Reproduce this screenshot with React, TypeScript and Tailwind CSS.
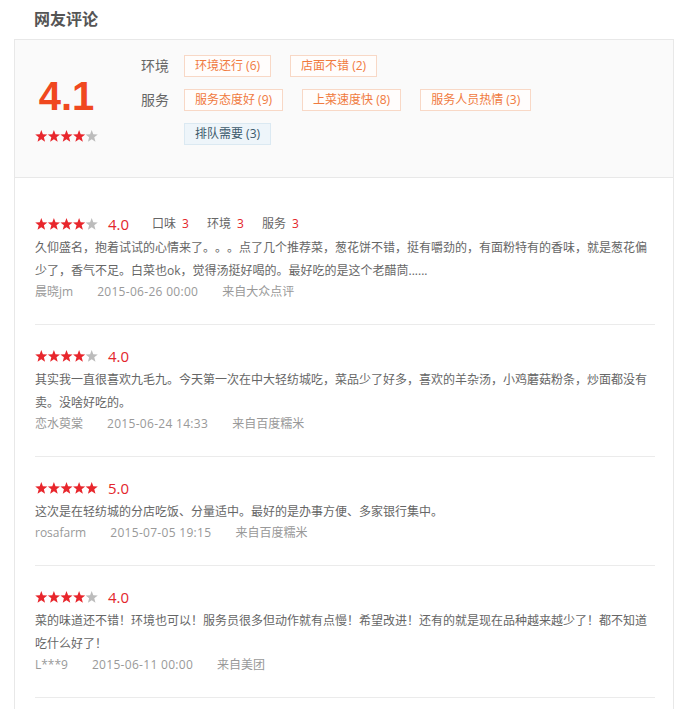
import React from 'react';

interface Review {
  score: number;
  sub?: { label: string; value: number }[];
  lines: string;
  user: string;
  time: string;
  source: string;
}

const reviews: Review[] = [
  {
    score: 4,
    sub: [
      { label: '口味', value: 3 },
      { label: '环境', value: 3 },
      { label: '服务', value: 3 },
    ],
    lines:
      '久仰盛名，抱着试试的心情来了。。。点了几个推荐菜，葱花饼不错，挺有嚼劲的，有面粉特有的香味，就是葱花偏少了，香气不足。白菜也ok，觉得汤挺好喝的。最好吃的是这个老醋茼......',
    user: '晨晓jm',
    time: '2015-06-26 00:00',
    source: '来自大众点评',
  },
  {
    score: 4,
    lines: '其实我一直很喜欢九毛九。今天第一次在中大轻纺城吃，菜品少了好多，喜欢的羊杂汤，小鸡蘑菇粉条，炒面都没有卖。没啥好吃的。',
    user: '恋水萸棠',
    time: '2015-06-24 14:33',
    source: '来自百度糯米',
  },
  {
    score: 5,
    lines: '这次是在轻纺城的分店吃饭、分量适中。最好的是办事方便、多家银行集中。',
    user: 'rosafarm',
    time: '2015-07-05 19:15',
    source: '来自百度糯米',
  },
  {
    score: 4,
    lines: '菜的味道还不错！环境也可以！服务员很多但动作就有点慢！希望改进！还有的就是现在品种越来越少了！都不知道吃什么好了！',
    user: 'L***9',
    time: '2015-06-11 00:00',
    source: '来自美团',
  },
];

const tagRows = [
  { label: '环境', tags: ['环境还行 (6)', '店面不错 (2)'], tone: 'good' },
  { label: '服务', tags: ['服务态度好 (9)', '上菜速度快 (8)', '服务人员热情 (3)'], tone: 'good' },
  { label: '', tags: ['排队需要 (3)'], tone: 'bad' },
];

const STAR = '6.3,0.1 7.89,4.32 12.39,4.52 8.87,7.33 10.06,11.68 6.3,9.2 2.54,11.68 3.73,7.33 0.21,4.52 4.71,4.32';

const Stars = ({ count }: { count: number }) => (
  <svg width="63" height="12" viewBox="0 0 63 12" className="block shrink-0">
    {[0, 1, 2, 3, 4].map((i) => (
      <polygon
        key={i}
        points={STAR}
        transform={`translate(${i * 12.6} 0)`}
        fill={i < count ? '#e8262c' : '#bcbcbc'}
      />
    ))}
  </svg>
);

export default function App() {
  return (
    <div className="w-[688px] min-h-[709px] bg-white font-['Open_Sans','Noto_Sans_CJK_SC',sans-serif] text-[#666] [text-spacing-trim:space-all]">
      <h2 className="h-[39px] pl-[34px] pt-[10px] text-[16px] leading-[18px] font-bold text-[#555]">网友评论</h2>

      <div className="ml-[14px] w-[660px] border border-b-0 border-[#e8e8e8] min-h-[670px]">
        {/* summary */}
        <div className="flex h-[138px] bg-[#fafafa] border-b border-[#e8e8e8]">
          <div className="w-[103px] flex flex-col items-center pt-[36px]">
            <div className="h-[40px] text-[40px] leading-[40px] font-bold text-[#f0481f] font-['Liberation_Sans',sans-serif]">4.1</div>
            <div className="mt-[14px]">
              <Stars count={4} />
            </div>
          </div>
          <div className="pl-[23px] pt-[15px] flex flex-col gap-[12px]">
            {tagRows.map((row, ri) => (
              <div key={ri} className="flex items-center h-[22px]">
                <span className="w-[43px] text-[14px] leading-[22px] text-[#666]">{row.label}</span>
                <div className="flex gap-[19px]">
                  {row.tags.map((t) => (
                    <span
                      key={t}
                      className={
                        row.tone === 'good'
                          ? 'h-[22px] px-[10px] border border-[#f8d8c6] bg-[#fffdfc] text-[12px] leading-[20px] text-[#f07a3e]'
                          : 'h-[22px] px-[10px] border border-[#dbe9f2] bg-[#eef5fa] text-[12px] leading-[20px] text-[#3d5a6c]'
                      }
                    >
                      {t}
                    </span>
                  ))}
                </div>
              </div>
            ))}
          </div>
        </div>

        {/* reviews */}
        <div className="pl-[20px] pr-[18px] pt-[15px]">
          {reviews.map((r, i) => (
            <div key={i} className="pt-[19px] pb-[22px] border-b border-[#ebebeb]">
              <div className="flex items-center h-[24px]">
                <Stars count={r.score} />
                <span className="ml-[10px] text-[15px] leading-[24px] text-[#e3262b]">{r.score.toFixed(1)}</span>
                {r.sub && (
                  <div className="flex ml-[23px] gap-[18px]">
                    {r.sub.map((s) => (
                      <span key={s.label} className="text-[12px] leading-[24px] text-[#666]">
                        {s.label}
                        <span className="ml-[6px] text-[#e3262b]">{s.value}</span>
                      </span>
                    ))}
                  </div>
                )}
              </div>
              <p className="text-[12px] leading-[23px] text-[#666]">{r.lines}</p>
              <div className="flex gap-[24px] text-[12px] leading-[20px] text-[#999]">
                <span>{r.user}</span>
                <span className="tracking-[0.3px]">{r.time}</span>
                <span>{r.source}</span>
              </div>
            </div>
          ))}
        </div>
      </div>
    </div>
  );
}
